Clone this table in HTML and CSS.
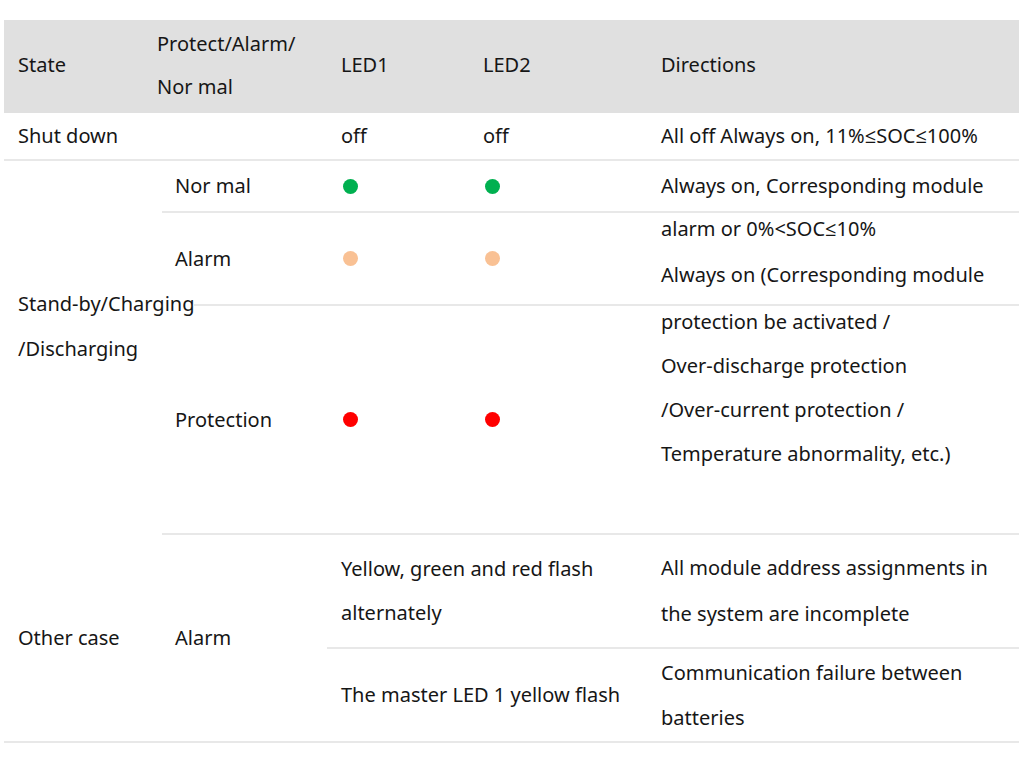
FILE: index.html
```html
<!DOCTYPE html>
<html lang="en">
<head>
<meta charset="utf-8">
<title>LED states</title>
<link rel="stylesheet" href="styles.css">
</head>
<body>
<div class="table">
  <div class="head">
    <div class="hcell">State</div>
    <div class="hcell">Protect/Alarm/<br>Nor mal</div>
    <div class="hcell">LED1</div>
    <div class="hcell">LED2</div>
    <div class="hcell">Directions</div>
  </div>
  <div class="body">
    <!-- row 1 -->
    <div class="cell line r1 c1">Shut down</div>
    <div class="cell line r1 c2"></div>
    <div class="cell line r1 c3">off</div>
    <div class="cell line r1 c4">off</div>
    <div class="cell line r1 c5">All off Always on, 11%≤SOC≤100%</div>

    <div class="cell standby"><span class="over">Stand-by/Charging<br>/Discharging</span></div>

    <!-- row 2 -->
    <div class="cell line r2 c2 sub">Nor mal</div>
    <div class="cell line r2 c3"><span class="dot green"></span></div>
    <div class="cell line r2 c4"><span class="dot green"></span></div>
    <div class="cell line r2 c5">Always on, Corresponding module</div>

    <!-- row 3 -->
    <div class="cell line r3 c2 sub">Alarm</div>
    <div class="cell line r3 c3"><span class="dot peach"></span></div>
    <div class="cell line r3 c4"><span class="dot peach"></span></div>
    <div class="cell line r3 c5 up"><div>alarm or 0%&lt;SOC≤10%</div><div class="l2">Always on (Corresponding module</div></div>

    <!-- row 4 -->
    <div class="cell line r4 c2 sub">Protection</div>
    <div class="cell line r4 c3"><span class="dot red"></span></div>
    <div class="cell line r4 c4"><span class="dot red"></span></div>
    <div class="cell line r4 c5 top"><div class="flow">protection be activated /<br>Over-discharge protection<br>/Over-current protection /<br>Temperature abnormality, etc.)</div></div>

    <!-- rows 5-6 -->
    <div class="cell line other c1">Other case</div>
    <div class="cell line other c2 sub">Alarm</div>

    <div class="cell line r5 c34">Yellow, green and red flash<br>alternately</div>
    <div class="cell line r5 c5 wide">All module address assignments in<br>the system are incomplete</div>

    <div class="cell line r6 c34">The master LED 1 yellow flash</div>
    <div class="cell line r6 c5 mid">Communication failure between<br>batteries</div>
  </div>
</div>
</body>
</html>
```
FILE: styles.css
```css
html, body {
  margin: 0;
  padding: 0;
  background: #ffffff;
}

body {
  font-family: "Noto Sans", "Open Sans", sans-serif;
  font-size: 20px;
  color: #161616;
}

.table {
  margin: 20px 0 0 4px;
  width: 1015px;
}

.head {
  display: grid;
  grid-template-columns: 139px 184px 142px 178px 1fr;
  height: 93px;
  background: #e0e0e0;
}

.hcell {
  display: flex;
  align-items: center;
  padding-left: 14px;
  line-height: 43px;
  padding-bottom: 4px;
}

.body {
  display: grid;
  grid-template-columns: 158px 165px 142px 178px 1fr;
  grid-template-rows: 48px 52px 93px 229px 114px 94px;
}

.cell {
  box-sizing: border-box;
  display: flex;
  flex-direction: column;
  justify-content: center;
  padding-left: 14px;
  line-height: 44px;
  white-space: nowrap;
}

.line {
  border-bottom: 2px solid #e8e8e8;
}

.sub { padding-left: 13px; }

.r1 { grid-row: 1; }
.r2 { grid-row: 2; }
.r3 { grid-row: 3; }
.r4 { grid-row: 4; }
.r5 { grid-row: 5; }
.r6 { grid-row: 6; }

.c1 { grid-column: 1; }
.c2 { grid-column: 2; }
.c3 { grid-column: 3; }
.c4 { grid-column: 4; }
.c5 { grid-column: 5; }
.c34 { grid-column: 3 / 5; }

.standby {
  grid-column: 1;
  grid-row: 2 / 5;
  justify-content: flex-start;
  padding-top: 120px;
  line-height: 45px;
  position: relative;
  z-index: 1;
}

.over {
  background: #ffffff;
  align-self: flex-start;
}

.other {
  grid-row: 5 / 7;
}

.up {
  justify-content: flex-start;
  line-height: 46px;
}

.up > div:first-child {
  margin-top: -7px;
}

.top {
  justify-content: flex-start;
}

.flow {
  margin-top: -6px;
  line-height: 44px;
}

.wide { line-height: 46px; }
.mid { line-height: 45px; }

.dot {
  display: block;
  width: 15px;
  height: 15px;
  border-radius: 50%;
  margin-left: 2px;
}

.green { background: #00b050; }
.peach { background: #f9c194; }
.red { background: #ff0000; }
```
